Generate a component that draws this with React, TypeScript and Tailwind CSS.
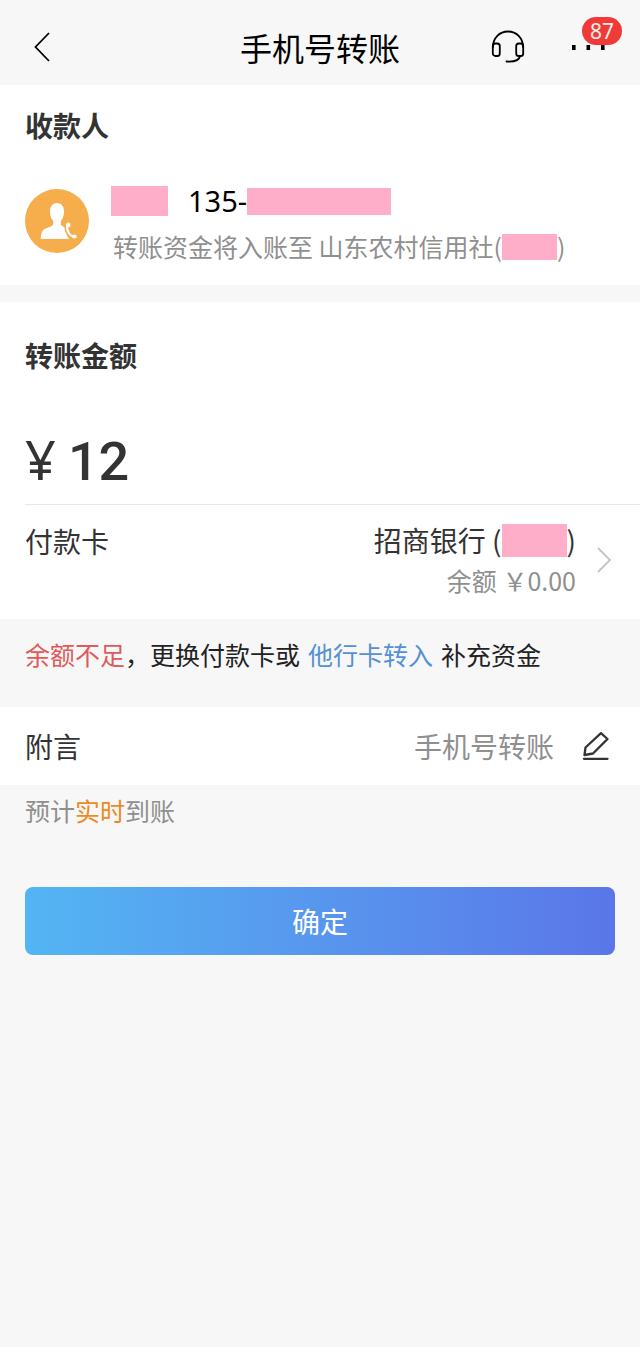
import { useState } from 'react';

const Mask = ({ className }: { className: string }) => (
  <span className={`inline-block shrink-0 bg-[#ffaec9] ${className}`} />
);

const BackIcon = () => (
  <svg className="h-8 w-5" viewBox="0 0 20 32" fill="none" stroke="#000" strokeWidth="1.8">
    <path d="M15 2 1.500 16 15 30" />
  </svg>
);

const HeadsetIcon = () => (
  <svg className="h-9 w-9" viewBox="0 0 36 36" fill="none" stroke="#000" strokeWidth="1.8" strokeLinecap="round">
    <path d="M3 18C3 9 9.500 2.500 18 2.500S33 9 33 18" />
    <rect x="2.800" y="14.500" width="7" height="12.500" rx="2.600" />
    <rect x="26.200" y="14.500" width="7" height="12.500" rx="2.600" />
    <path d="M30 27C29.500 30.500 25 33 16.500 32.500" />
  </svg>
);

const MoreIcon = () => (
  <svg className="h-9 w-9" viewBox="0 0 36 36" fill="#000">
    <rect x="2" y="16" width="3.600" height="5" />
    <rect x="16.500" y="16" width="3.600" height="5" />
    <rect x="31" y="16" width="3.600" height="5" />
  </svg>
);

const ContactIcon = () => (
  <svg className="mt-2 h-16 w-16 shrink-0" viewBox="0 0 64 64">
    <circle cx="32" cy="32" r="32" fill="#f6ad4c" />
    <path
      d="M32 14c4.500 0 7 3.500 7 8.500 0 4.500-1.500 7.500-3.200 9.500v2.500c0 1.500 1 2.500 3.500 3.500 1 5 2.500 9 5 12H15.800c0-5 1-9 5-10.500 4.500-1.800 7.500-2.500 7.500-5v-2.500c-2-2-3.300-5-3.300-9.500 0-5 2.500-8.500 7-8.500z"
      fill="#fff"
    />
    <path d="M42 36C41.500 42 44.500 47 50 49" fill="none" stroke="#f6ad4c" strokeWidth="5" />
    <path d="M42.200 36C41.500 42 44.500 46.500 49 48.200" fill="none" stroke="#fff" strokeWidth="2.400" />
    <ellipse cx="43.300" cy="36" rx="2.200" ry="2.400" fill="#fff" />
    <ellipse cx="49.500" cy="47.400" rx="2.200" ry="2" fill="#fff" />
  </svg>
);

const ChevronIcon = () => (
  <svg className="h-7 w-4 shrink-0" viewBox="0 0 16 28" fill="none" stroke="#c4c4c4" strokeWidth="1.800">
    <path d="M2 2 14 14 2 26" />
  </svg>
);

const PencilIcon = () => (
  <svg className="h-7 w-7" viewBox="0 0 28 28" fill="none" stroke="#333" strokeWidth="2.300" strokeLinejoin="round" strokeLinecap="round">
    <path d="M19 1.200 25.500 7 11 21.500 2.500 23 3.500 15.500z" />
    <path d="M2 26.800H25.500" />
  </svg>
);

export default function App() {
  const [amount, setAmount] = useState('12');
  const [memo, setMemo] = useState('手机号转账');

  return (
    <div className="min-h-screen w-full bg-[#f7f7f7] font-['Noto_Sans_CJK_SC',sans-serif] text-[#333]">
      {/* Header */}
      <header className="grid h-[85px] grid-cols-[1fr_auto_1fr] items-center px-[34px] pt-2">
        <button type="button" aria-label="返回" className="justify-self-start">
          <BackIcon />
        </button>
        <h1 className="text-[32px] leading-10 text-black">手机号转账</h1>
        <div className="flex items-center justify-end gap-11">
          <button type="button" aria-label="客服">
            <HeadsetIcon />
          </button>
          <button type="button" aria-label="更多" className="relative">
            <MoreIcon />
            <span className="absolute -top-3 left-3 flex h-7 w-10 items-center justify-center rounded-full bg-[#f03a37] font-['Noto_Sans',sans-serif] text-[21px] leading-7 text-[#fff0e8]">
              87
            </span>
          </button>
        </div>
      </header>

      {/* Payee */}
      <section className="h-[200px] bg-white px-[25px] pt-5">
        <h2 className="text-[28px] leading-10 font-bold">收款人</h2>
        <div className="mt-9 flex items-start gap-[22px]">
          <ContactIcon />
          <div className="flex flex-col gap-[6px]">
            <div className="flex h-10 items-center text-[29px] text-black">
              <Mask className="h-[30px] w-[57px]" />
              <span className="ml-5 font-['Noto_Sans',sans-serif]">135-</span>
              <Mask className="h-[27px] w-36" />
            </div>
            <div className="flex h-10 items-center pl-0.5 text-[25px] whitespace-pre text-[#8f8f8f]">
              <span>转账资金将入账至 山东农村信用社(</span>
              <Mask className="h-[26px] w-[55px]" />
              <span>)</span>
            </div>
          </div>
        </div>
      </section>

      {/* Amount and paying card */}
      <section className="mt-[17px] bg-white pt-[33px] pl-[25px]">
        <h2>
          <label htmlFor="amount" className="block text-[28px] leading-10 font-bold">转账金额</label>
        </h2>
        <div className="mt-12 flex items-baseline gap-3 border-b border-[#e8e8e8] pb-[6px] leading-[72px]">
          <span className="font-['Noto_Sans',sans-serif] text-[54px]">¥</span>
          <input
            id="amount"
            inputMode="decimal"
            value={amount}
            onChange={(e) => setAmount(e.target.value)}
            className="h-[72px] min-w-0 flex-1 font-['Roboto',sans-serif] text-[54px] font-medium outline-none"
          />
        </div>
        <button type="button" className="flex h-[114px] w-full items-center pr-7 pb-1 text-left">
          <span className="self-start pt-4 text-[28px] leading-10">付款卡</span>
          <span className="ml-auto flex flex-col items-end">
            <span className="flex h-10 items-center text-[28px] whitespace-pre">
              招商银行 (
              <Mask className="h-[33px] w-[65px]" />)
            </span>
            <span className="text-[25px] leading-10 text-[#8f8f8f]">余额 ￥0.00</span>
          </span>
          <span className="ml-5">
            <ChevronIcon />
          </span>
        </button>
      </section>

      {/* Low balance notice */}
      <p className="h-[88px] px-[25px] pt-[15px] text-[25px] leading-10 text-[#222]">
        <span className="text-[#e05a5a]">余额不足</span>，更换付款卡或
        <a href="#transfer-in" className="mx-2 text-[#5590d8]">他行卡转入</a>
        补充资金
      </p>

      {/* Memo */}
      <section className="flex h-[78px] items-center bg-white pr-[30px] pl-[25px] text-[28px]">
        <label htmlFor="memo">附言</label>
        <input
          id="memo"
          value={memo}
          onChange={(e) => setMemo(e.target.value)}
          className="h-10 min-w-0 flex-1 text-right text-[#8f8f8f] outline-none"
        />
        <button type="button" aria-label="编辑附言" className="ml-7">
          <PencilIcon />
        </button>
      </section>
      <p className="px-[25px] pt-[5px] text-[25px] leading-10 text-[#8f8f8f]">
        预计<span className="text-[#ee8a22]">实时</span>到账
      </p>

      <div className="px-[25px] pt-[57px]">
        <button
          type="button"
          className="h-[68px] w-full rounded-lg bg-linear-to-r from-[#53b5f3] to-[#5a76e8] text-[28px] text-white"
        >
          确定
        </button>
      </div>
    </div>
  );
}
